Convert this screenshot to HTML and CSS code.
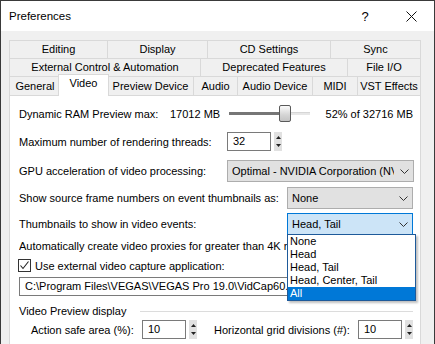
FILE: index.html
```html
<!DOCTYPE html>
<html>
<head>
<meta charset="utf-8">
<link rel="stylesheet" href="styles.css">
</head>
<body>
<div class="win">
  <div class="titlebar">
    <span class="title">Preferences</span>
    <span class="capbtn help">?</span>
    <span class="capbtn close"><svg width="11" height="11" viewBox="0 0 11 11"><path d="M0.5 0.5L10.5 10.5M10.5 0.5L0.5 10.5" stroke="#111" stroke-width="1" fill="none"/></svg></span>
  </div>
  <div class="client">
    <div class="tabs">
      <div class="tabrow">
        <div class="tab t-editing">Editing</div>
        <div class="tab t-display">Display</div>
        <div class="tab t-cd">CD Settings</div>
        <div class="tab t-sync">Sync</div>
      </div>
      <div class="tabrow">
        <div class="tab t-ext">External Control &amp; Automation</div>
        <div class="tab t-dep">Deprecated Features</div>
        <div class="tab t-fio">File I/O</div>
      </div>
      <div class="tabrow last">
        <div class="tab t-gen">General</div>
        <div class="tab t-video sel">Video</div>
        <div class="tab t-prev">Preview Device</div>
        <div class="tab t-audio">Audio</div>
        <div class="tab t-adev">Audio Device</div>
        <div class="tab t-midi">MIDI</div>
        <div class="tab t-vst">VST Effects</div>
      </div>
    </div>
    <div class="panel">
      <div class="row r1">
        <span class="lbl w-ram">Dynamic RAM Preview max:</span>
        <span class="val">17012 MB</span>
        <div class="slider">
          <div class="track-l"></div>
          <div class="thumb"></div>
          <div class="track-r"></div>
        </div>
        <span class="pct">52% of 32716 MB</span>
      </div>
      <div class="row r2">
        <span class="lbl w-208">Maximum number of rendering threads:</span>
        <div class="edit spinbox">32</div>
        <div class="spinbtns">
          <svg width="5" height="3" viewBox="0 0 5 3"><path d="M0 3L2.5 0L5 3Z" fill="#222"/></svg>
          <svg width="5" height="3" viewBox="0 0 5 3"><path d="M0 0L2.5 3L5 0Z" fill="#222"/></svg>
        </div>
      </div>
      <div class="row r3">
        <span class="lbl w-208">GPU acceleration of video processing:</span>
        <div class="combo gpu">
          <span class="ctext">Optimal - NVIDIA Corporation (NVIDIA GeForce RTX)</span>
          <svg class="chev" width="9" height="5" viewBox="0 0 9 5"><path d="M0.5 0.5L4.5 4.5L8.5 0.5" stroke="#333" fill="none"/></svg>
        </div>
      </div>
      <div class="row r4">
        <span class="lbl w-268">Show source frame numbers on event thumbnails as:</span>
        <div class="combo small">
          <span class="ctext">None</span>
          <svg class="chev" width="9" height="5" viewBox="0 0 9 5"><path d="M0.5 0.5L4.5 4.5L8.5 0.5" stroke="#333" fill="none"/></svg>
        </div>
      </div>
      <div class="row r5">
        <span class="lbl w-268">Thumbnails to show in video events:</span>
        <div class="combo small focus">
          <span class="ctext">Head, Tail</span>
          <svg class="chev" width="9" height="5" viewBox="0 0 9 5"><path d="M0.5 0.5L4.5 4.5L8.5 0.5" stroke="#333" fill="none"/></svg>
          <ul class="droplist">
            <li>None</li>
            <li>Head</li>
            <li>Head, Tail</li>
            <li>Head, Center, Tail</li>
            <li class="hl">All</li>
          </ul>
        </div>
      </div>
      <div class="row r6">
        <span class="lbl">Automatically create video proxies for greater than 4K resolution media</span>
      </div>
      <div class="row r7">
        <span class="check"><svg width="11" height="11" viewBox="0 0 11 11"><path d="M1.5 5.5L4 8.5L9.5 1.5" stroke="#222" stroke-width="1.1" fill="none"/></svg></span>
        <span class="lbl">Use external video capture application:</span>
      </div>
      <div class="row r8">
        <div class="edit path">C:\Program Files\VEGAS\VEGAS Pro 19.0\VidCap60.EXE</div>
      </div>
      <div class="row grp">
        <span class="lbl">Video Preview display</span>
        <span class="gline"></span>
      </div>
      <div class="row r9">
        <span class="lbl w-act">Action safe area (%):</span>
        <div class="edit spinbox">10</div>
        <div class="spinbtns">
          <svg width="5" height="3" viewBox="0 0 5 3"><path d="M0 3L2.5 0L5 3Z" fill="#222"/></svg>
          <svg width="5" height="3" viewBox="0 0 5 3"><path d="M0 0L2.5 3L5 0Z" fill="#222"/></svg>
        </div>
        <span class="lbl w-hor">Horizontal grid divisions (#):</span>
        <div class="edit spinbox">10</div>
        <div class="spinbtns">
          <svg width="5" height="3" viewBox="0 0 5 3"><path d="M0 3L2.5 0L5 3Z" fill="#222"/></svg>
          <svg width="5" height="3" viewBox="0 0 5 3"><path d="M0 0L2.5 3L5 0Z" fill="#222"/></svg>
        </div>
      </div>
    </div>
  </div>
</div>
</body>
</html>
```
FILE: styles.css
```css
* { box-sizing: border-box; }
html, body { margin: 0; padding: 0; }
body {
  font-family: "Liberation Sans", Arial, sans-serif;
  font-size: 11px;
  color: #000;
  background: #fff;
}
.win {
  width: 435px;
  height: 344px;
  border: 1px solid #3a3a3a;
  border-bottom: none;
  background: #f0f0f0;
  display: flex;
  flex-direction: column;
  overflow: hidden;
}
.titlebar {
  flex: none;
  height: 30px;
  background: #fff;
  display: flex;
  align-items: center;
}
.title {
  flex: 1;
  margin-left: 8px;
  font-size: 11.5px;
}
.capbtn {
  width: 46px;
  height: 30px;
  display: flex;
  align-items: center;
  justify-content: center;
}
.help { font-size: 13px; padding-top: 1px; }

.client {
  flex: 1;
  display: flex;
  flex-direction: column;
  padding: 9px 0 0 8px;
}
.tabs { width: 412px; }
.tabrow {
  display: flex;
  height: 18px;
}
.tabrow.last { height: 19px; }
.tab {
  border-top: 1px solid #d9d9d9;
  border-left: 1px solid #d9d9d9;
  text-align: center;
  line-height: 17px;
  white-space: nowrap;
  background: #f0f0f0;
}
.tabrow.last .tab { line-height: 18px; }
.tab:last-child { border-right: 1px solid #d9d9d9; }
.t-editing { width: 98px; }
.t-display { width: 100px; }
.t-cd { width: 123px; }
.t-sync { width: 91px; }
.t-ext { width: 191px; }
.t-dep { width: 147px; }
.t-fio { width: 74px; }
.t-gen { width: 51px; }
.t-video { width: 51px; }
.t-prev { width: 86px; }
.t-audio { width: 44px; }
.t-adev { width: 75px; }
.t-midi { width: 45px; }
.t-vst { width: 64px; }
.tab.sel {
  position: relative;
  z-index: 2;
  margin: -2px -2px 0 -2px;
  height: 22px;
  background: #fff;
  border-right: 1px solid #d9d9d9;
  line-height: 17px;
}
.tabrow.last .tab.sel { line-height: 17px; }

.panel {
  width: 412px;
  flex: 1;
  background: #fff;
  border: 1px solid #d9d9d9;
  border-bottom: none;
  padding: 8px 7px 0 9px;
}
.row {
  display: flex;
  align-items: center;
  white-space: nowrap;
}
.lbl { flex: none; }
.r1 { height: 19px; }
.r2 { height: 19px; margin-top: 9px; }
.r3 { height: 22px; margin-top: 9px; }
.r4 { height: 22px; margin-top: 5px; }
.r5 { height: 22px; margin-top: 4px; }
.r6 { height: 14px; margin-top: 4px; overflow: hidden; }
.r7 { height: 13px; margin-top: 6px; }
.r8 { height: 19px; margin-top: 5px; }
.grp { height: 14px; margin-top: 8px; }
.r9 { height: 19px; margin-top: 2px; }

.w-ram { width: 151px; }
.val { width: 55px; }
.w-208 { width: 208px; }
.w-268 { width: 268px; }
.w-act { width: 111px; margin-left: 12px; }
.w-hor { width: 144px; margin-left: 17px; }

.slider {
  width: 90px;
  height: 19px;
  display: flex;
  align-items: center;
  padding-left: 4px;
}
.track-l {
  width: 50px;
  height: 3px;
  background: #767676;
}
.thumb {
  width: 12px;
  height: 17px;
  border: 1px solid #5a5a5a;
  border-radius: 2px;
  background: linear-gradient(#fbfbfb, #d4d4d4 60%, #c4c4c4);
}
.track-r {
  width: 19px;
  height: 3px;
  background: #e7e7e7;
  border-top: 1px solid #d6d6d6;
}
.pct { margin-left: 11px; }

.edit {
  height: 19px;
  border: 1px solid #7a7a7a;
  background: #fff;
  padding-left: 5px;
  line-height: 17px;
  overflow: hidden;
}
.spinbox { width: 44px; }
.spinbtns {
  width: 8px;
  height: 19px;
  margin-left: 3px;
  background: #e1e1e1;
  display: flex;
  flex-direction: column;
  align-items: center;
  justify-content: space-between;
  padding: 4px 0;
}
.path { width: 396px; }

.combo {
  position: relative;
  height: 22px;
  border: 1px solid #adadad;
  background: #e1e1e1;
  display: flex;
  align-items: center;
  padding: 0 4px 0 4px;
}
.combo.gpu { width: 187px; }
.combo.small { width: 128px; }
.combo.focus {
  background: #cce4f7;
  border-color: #0078d7;
}
.ctext {
  flex: 1;
  overflow: hidden;
  white-space: nowrap;
  margin-right: 6px;
}
.chev { flex: none; }

.droplist {
  position: absolute;
  z-index: 5;
  left: -1px;
  top: 20px;
  width: 129px;
  margin: 0;
  padding: 0;
  list-style: none;
  background: #fff;
  border: 1px solid #1e5a9a;
  box-shadow: 2px 2px 2px rgba(0,0,0,0.25);
}
.droplist li {
  height: 13px;
  line-height: 13px;
  padding-left: 2px;
}
.droplist li.hl {
  background: #0078d7;
  color: #fff;
}

.check {
  flex: none;
  width: 13px;
  height: 13px;
  border: 1px solid #333;
  background: #fff;
  margin-left: -1px;
  margin-right: 4px;
  display: flex;
  align-items: center;
  justify-content: center;
}
.gline {
  flex: 1;
  height: 1px;
  background: #dcdcdc;
  margin-left: 14px;
}
```
